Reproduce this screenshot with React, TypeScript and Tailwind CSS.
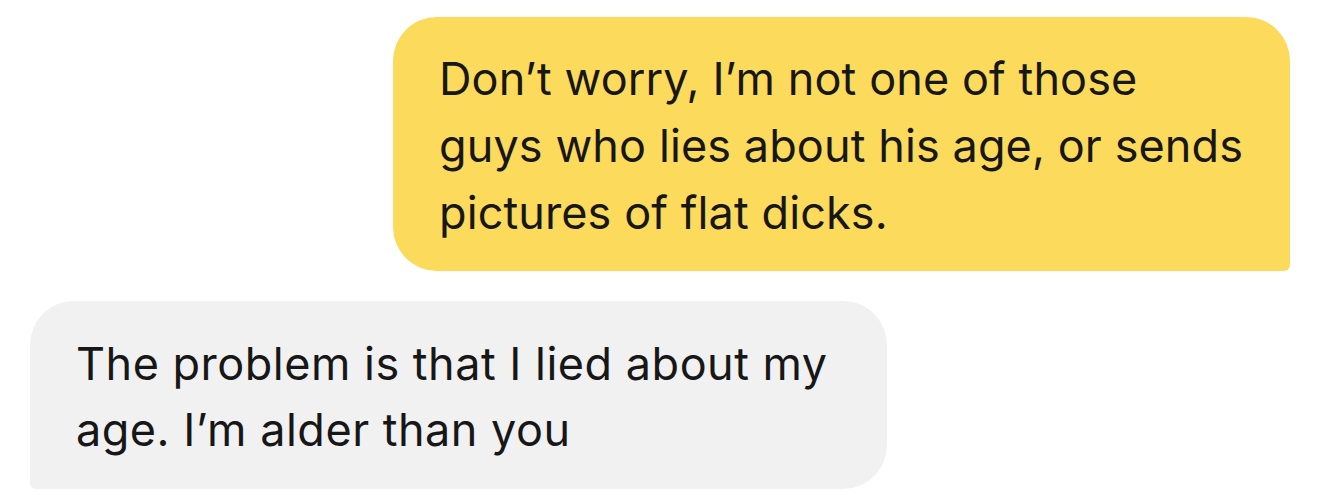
import React from "react";

// Chat lines, broken where the screenshot breaks them
const sent = [
  "Don\u2019t worry, I\u2019m not one of those",
  "guys who lies about his age, or sends",
  "pictures of flat dicks.",
];

const received = ["The problem is that I lied about my", "age. I\u2019m alder than you"];

const App = () => {
  return (
    <div
      className="min-h-[498px] bg-white px-[30px] pt-[17px] flex flex-col gap-[30px] text-[#171717]"
      style={{ fontFamily: "Inter, 'Noto Sans', sans-serif" }}
    >
      <div className="flex justify-end">
        <div className="w-[897px] bg-[#fcda5c] rounded-[44px] rounded-br-[6px] pl-[46px] pr-[40px] pt-[28px] pb-[25px] text-[45px] leading-[67px] tracking-[0.1px]">
          {sent.map((line) => (
            <div key={line}>{line}</div>
          ))}
        </div>
      </div>

      <div className="flex justify-start">
        <div className="w-[857px] bg-[#f1f1f1] rounded-[44px] rounded-bl-[6px] pl-[46px] pr-[30px] pt-[30px] pb-[26px] text-[45px] leading-[66px] tracking-[0.5px]">
          {received.map((line) => (
            <div key={line}>{line}</div>
          ))}
        </div>
      </div>
    </div>
  );
};

export default App;
